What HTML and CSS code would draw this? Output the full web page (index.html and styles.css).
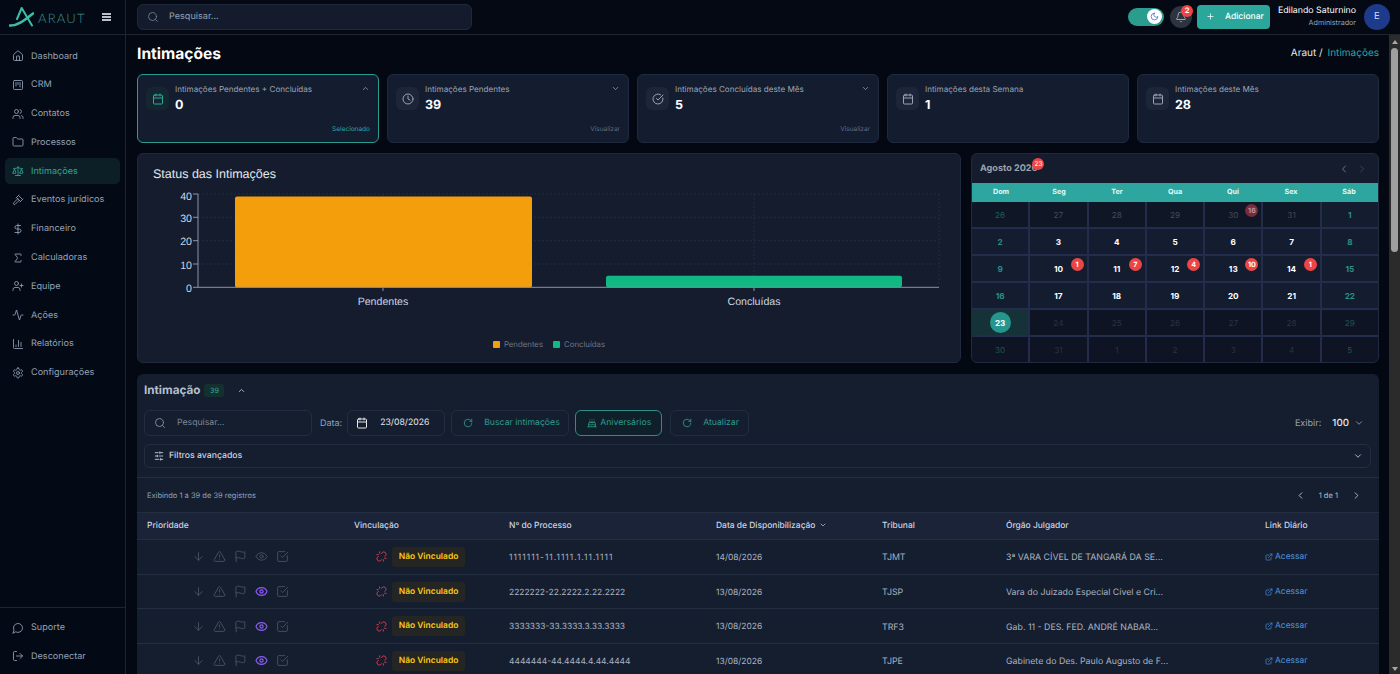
FILE: index.html
```html
<!DOCTYPE html>
<html lang="pt-BR">

<head>
    <meta charset="UTF-8">
    <meta name="viewport" content="width=device-width, initial-scale=1.0">
    <title>Intimações | Araut</title>
    <link rel="stylesheet" href="styles.css">
</head>

<body>
    <svg class="sprite" xmlns="http://www.w3.org/2000/svg">
        <symbol id="i-home" viewBox="0 0 24 24"><path d="M15 21v-8a1 1 0 0 0-1-1h-4a1 1 0 0 0-1 1v8"/><path d="M3 10a2 2 0 0 1 .709-1.528l7-5.999a2 2 0 0 1 2.582 0l7 5.999A2 2 0 0 1 21 10v9a2 2 0 0 1-2 2H5a2 2 0 0 1-2-2z"/></symbol>
        <symbol id="i-crm" viewBox="0 0 24 24"><rect x="3" y="3" width="18" height="18" rx="2"/><path d="M8 7v7"/><path d="M12 7v4"/><path d="M16 7v9"/></symbol>
        <symbol id="i-users" viewBox="0 0 24 24"><path d="M16 21v-2a4 4 0 0 0-4-4H6a4 4 0 0 0-4 4v2"/><circle cx="9" cy="7" r="4"/><path d="M22 21v-2a4 4 0 0 0-3-3.87"/><path d="M16 3.13a4 4 0 0 1 0 7.75"/></symbol>
        <symbol id="i-folder" viewBox="0 0 24 24"><path d="M20 20a2 2 0 0 0 2-2V8a2 2 0 0 0-2-2h-7.9a2 2 0 0 1-1.69-.9L9.6 3.9A2 2 0 0 0 7.93 3H4a2 2 0 0 0-2 2v13a2 2 0 0 0 2 2Z"/></symbol>
        <symbol id="i-scale" viewBox="0 0 24 24"><path d="m16 16 3-8 3 8c-.87.65-1.92 1-3 1s-2.13-.35-3-1Z"/><path d="m2 16 3-8 3 8c-.87.65-1.92 1-3 1s-2.13-.35-3-1Z"/><path d="M7 21h10"/><path d="M12 3v18"/><path d="M3 7h2c2 0 5-1 7-2 2 1 5 2 7 2h2"/></symbol>
        <symbol id="i-gavel" viewBox="0 0 24 24"><path d="m14.5 12.5-8 8a2.119 2.119 0 1 1-3-3l8-8"/><path d="m16 16 6-6"/><path d="m8 8 6-6"/><path d="m9 7 8 8"/><path d="m21 11-8-8"/></symbol>
        <symbol id="i-dollar" viewBox="0 0 24 24"><path d="M12 2v20"/><path d="M17 5H9.5a3.5 3.5 0 0 0 0 7h5a3.5 3.5 0 0 1 0 7H6"/></symbol>
        <symbol id="i-sigma" viewBox="0 0 24 24"><path d="M18 7V5a1 1 0 0 0-1-1H6.5a.5.5 0 0 0-.4.8l4.5 6a2 2 0 0 1 0 2.4l-4.5 6a.5.5 0 0 0 .4.8H17a1 1 0 0 0 1-1v-2"/></symbol>
        <symbol id="i-user-plus" viewBox="0 0 24 24"><path d="M16 21v-2a4 4 0 0 0-4-4H6a4 4 0 0 0-4 4v2"/><circle cx="9" cy="7" r="4"/><path d="M19 8v6"/><path d="M22 11h-6"/></symbol>
        <symbol id="i-activity" viewBox="0 0 24 24"><path d="M22 12h-2.48a2 2 0 0 0-1.93 1.46l-2.35 8.36a.25.25 0 0 1-.48 0L9.24 2.18a.25.25 0 0 0-.48 0l-2.35 8.36A2 2 0 0 1 4.49 12H2"/></symbol>
        <symbol id="i-chart" viewBox="0 0 24 24"><path d="M3 3v16a2 2 0 0 0 2 2h16"/><path d="M18 17V9"/><path d="M13 17V5"/><path d="M8 17v-3"/></symbol>
        <symbol id="i-settings" viewBox="0 0 24 24"><path d="M12.22 2h-.44a2 2 0 0 0-2 2v.18a2 2 0 0 1-1 1.73l-.43.25a2 2 0 0 1-2 0l-.15-.08a2 2 0 0 0-2.73.73l-.22.38a2 2 0 0 0 .73 2.73l.15.1a2 2 0 0 1 1 1.72v.51a2 2 0 0 1-1 1.74l-.15.09a2 2 0 0 0-.73 2.73l.22.38a2 2 0 0 0 2.73.73l.15-.08a2 2 0 0 1 2 0l.43.25a2 2 0 0 1 1 1.73V20a2 2 0 0 0 2 2h.44a2 2 0 0 0 2-2v-.18a2 2 0 0 1 1-1.73l.43-.25a2 2 0 0 1 2 0l.15.08a2 2 0 0 0 2.73-.73l.22-.39a2 2 0 0 0-.73-2.73l-.15-.08a2 2 0 0 1-1-1.74v-.5a2 2 0 0 1 1-1.74l.15-.09a2 2 0 0 0 .73-2.73l-.22-.38a2 2 0 0 0-2.73-.73l-.15.08a2 2 0 0 1-2 0l-.43-.25a2 2 0 0 1-1-1.73V4a2 2 0 0 0-2-2z"/><circle cx="12" cy="12" r="3"/></symbol>
        <symbol id="i-message" viewBox="0 0 24 24"><path d="M7.9 20A9 9 0 1 0 4 16.1L2 22Z"/></symbol>
        <symbol id="i-logout" viewBox="0 0 24 24"><path d="M9 21H5a2 2 0 0 1-2-2V5a2 2 0 0 1 2-2h4"/><path d="m16 17 5-5-5-5"/><path d="M21 12H9"/></symbol>
        <symbol id="i-search" viewBox="0 0 24 24"><circle cx="11" cy="11" r="8"/><path d="m21 21-4.3-4.3"/></symbol>
        <symbol id="i-calendar" viewBox="0 0 24 24"><path d="M8 2v4"/><path d="M16 2v4"/><rect x="3" y="4" width="18" height="18" rx="2"/><path d="M3 10h18"/></symbol>
        <symbol id="i-clock" viewBox="0 0 24 24"><circle cx="12" cy="12" r="10"/><path d="M12 6v6l4 2"/></symbol>
        <symbol id="i-circle-check" viewBox="0 0 24 24"><path d="M21.801 10A10 10 0 1 1 17 3.335"/><path d="m9 11 3 3L22 4"/></symbol>
        <symbol id="i-up" viewBox="0 0 24 24"><path d="m18 15-6-6-6 6"/></symbol>
        <symbol id="i-down" viewBox="0 0 24 24"><path d="m6 9 6 6 6-6"/></symbol>
        <symbol id="i-left" viewBox="0 0 24 24"><path d="m15 18-6-6 6-6"/></symbol>
        <symbol id="i-right" viewBox="0 0 24 24"><path d="m9 18 6-6-6-6"/></symbol>
        <symbol id="i-plus" viewBox="0 0 24 24"><path d="M5 12h14"/><path d="M12 5v14"/></symbol>
        <symbol id="i-bell" viewBox="0 0 24 24"><path d="M10.268 21a2 2 0 0 0 3.464 0"/><path d="M3.262 15.326A1 1 0 0 0 4 17h16a1 1 0 0 0 .74-1.673C19.41 13.956 18 12.499 18 8A6 6 0 0 0 6 8c0 4.499-1.411 5.956-2.738 7.326"/></symbol>
        <symbol id="i-moon" viewBox="0 0 24 24"><path d="M12 3a6 6 0 0 0 9 9 9 9 0 1 1-9-9Z"/></symbol>
        <symbol id="i-refresh" viewBox="0 0 24 24"><path d="M21 12a9 9 0 1 1-9-9c2.52 0 4.93 1 6.74 2.74L21 8"/><path d="M21 3v5h-5"/></symbol>
        <symbol id="i-cake" viewBox="0 0 24 24"><path d="M20 21v-8a2 2 0 0 0-2-2H6a2 2 0 0 0-2 2v8"/><path d="M4 16s.5-1 2-1 2.5 2 4 2 2.5-2 4-2 2.5 2 4 2 2-1 2-1"/><path d="M2 21h20"/><path d="M7 8v3"/><path d="M12 8v3"/><path d="M17 8v3"/><path d="M7 4h.01"/><path d="M12 4h.01"/><path d="M17 4h.01"/></symbol>
        <symbol id="i-sliders" viewBox="0 0 24 24"><path d="M21 4h-7"/><path d="M10 4H3"/><path d="M21 12h-9"/><path d="M8 12H3"/><path d="M21 20h-5"/><path d="M12 20H3"/><path d="M14 2v4"/><path d="M8 10v4"/><path d="M16 18v4"/></symbol>
        <symbol id="i-arrow-down" viewBox="0 0 24 24"><path d="M12 5v14"/><path d="m19 12-7 7-7-7"/></symbol>
        <symbol id="i-alert" viewBox="0 0 24 24"><path d="m21.73 18-8-14a2 2 0 0 0-3.48 0l-8 14A2 2 0 0 0 4 21h16a2 2 0 0 0 1.73-3"/><path d="M12 9v4"/><path d="M12 17h.01"/></symbol>
        <symbol id="i-flag" viewBox="0 0 24 24"><path d="M4 15s1-1 4-1 5 2 8 2 4-1 4-1V3s-1 1-4 1-5-2-8-2-4 1-4 1z"/><path d="M4 22v-7"/></symbol>
        <symbol id="i-eye" viewBox="0 0 24 24"><path d="M2.062 12.348a1 1 0 0 1 0-.696 10.75 10.75 0 0 1 19.876 0 1 1 0 0 1 0 .696 10.75 10.75 0 0 1-19.876 0"/><circle cx="12" cy="12" r="3"/></symbol>
        <symbol id="i-check" viewBox="0 0 24 24"><path d="M21 10.5V19a2 2 0 0 1-2 2H5a2 2 0 0 1-2-2V5a2 2 0 0 1 2-2h11"/><path d="m9 11 3 3L22 4"/></symbol>
        <symbol id="i-unlink" viewBox="0 0 24 24"><path d="m18.84 12.25 1.72-1.71h-.02a5.004 5.004 0 0 0-.12-7.07 5.006 5.006 0 0 0-6.95 0l-1.72 1.71"/><path d="m5.17 11.75-1.71 1.71a5.004 5.004 0 0 0 .12 7.07 5.006 5.006 0 0 0 6.95 0l1.71-1.71"/><path d="M8 2v3"/><path d="M2 8h3"/><path d="M16 19v3"/><path d="M19 16h3"/></symbol>
        <symbol id="i-external" viewBox="0 0 24 24"><path d="M15 3h6v6"/><path d="M10 14 21 3"/><path d="M18 13v6a2 2 0 0 1-2 2H5a2 2 0 0 1-2-2V8a2 2 0 0 1 2-2h6"/></symbol>
    </svg>

    <div class="app">
        <aside class="sidebar">
            <div class="brand">
                <svg class="brand-mark" viewBox="0 0 25 20" fill="none" stroke="#3dbcaa" stroke-linecap="round" stroke-linejoin="round">
                    <path d="M8 12 12.7 1 23 18.5" stroke-width="2"/>
                    <path d="M1 18.5C8 19 14 14.5 24 6.5" stroke-width="2.6"/>
                </svg>
                <span class="brand-name">ARAUT</span>
                <span class="burger"><i></i><i></i><i></i></span>
            </div>
            <nav class="nav">
                <a class="nav-item"><svg class="icon"><use href="#i-home"/></svg>Dashboard</a>
                <a class="nav-item"><svg class="icon"><use href="#i-crm"/></svg>CRM</a>
                <a class="nav-item"><svg class="icon"><use href="#i-users"/></svg>Contatos</a>
                <a class="nav-item"><svg class="icon"><use href="#i-folder"/></svg>Processos</a>
                <a class="nav-item active"><svg class="icon"><use href="#i-scale"/></svg>Intimações</a>
                <a class="nav-item"><svg class="icon"><use href="#i-gavel"/></svg>Eventos jurídicos</a>
                <a class="nav-item"><svg class="icon"><use href="#i-dollar"/></svg>Financeiro</a>
                <a class="nav-item"><svg class="icon"><use href="#i-sigma"/></svg>Calculadoras</a>
                <a class="nav-item"><svg class="icon"><use href="#i-user-plus"/></svg>Equipe</a>
                <a class="nav-item"><svg class="icon"><use href="#i-activity"/></svg>Ações</a>
                <a class="nav-item"><svg class="icon"><use href="#i-chart"/></svg>Relatórios</a>
                <a class="nav-item"><svg class="icon"><use href="#i-settings"/></svg>Configurações</a>
            </nav>
            <div class="nav nav-foot">
                <a class="nav-item"><svg class="icon"><use href="#i-message"/></svg>Suporte</a>
                <a class="nav-item"><svg class="icon"><use href="#i-logout"/></svg>Desconectar</a>
            </div>
        </aside>

        <div class="column">
            <header class="topbar">
                <div class="top-search">
                    <svg class="icon"><use href="#i-search"/></svg>
                    <span>Pesquisar...</span>
                </div>
                <div class="top-actions">
                    <span class="toggle"><span class="knob"><svg class="icon"><use href="#i-moon"/></svg></span></span>
                    <span class="bell"><svg class="icon"><use href="#i-bell"/></svg><b class="bell-count">2</b></span>
                    <a class="add-btn"><svg class="icon"><use href="#i-plus"/></svg>Adicionar</a>
                    <div class="user">
                        <div class="user-name">Edilando Saturnino</div>
                        <div class="user-role">Administrador</div>
                    </div>
                    <span class="avatar">E</span>
                </div>
            </header>

            <div class="view">
                <main class="main">
                    <div class="page-head">
                        <h1>Intimações</h1>
                        <div class="crumbs">Araut / <span>Intimações</span></div>
                    </div>

                    <div class="stats">
                        <div class="stat selected">
                            <span class="stat-icon"><svg class="icon"><use href="#i-calendar"/></svg></span>
                            <div class="stat-label">Intimações Pendentes + Concluídas</div>
                            <svg class="icon stat-chevron"><use href="#i-up"/></svg>
                            <div class="stat-value">0</div>
                            <div class="stat-foot">Selecionado</div>
                        </div>
                        <div class="stat">
                            <span class="stat-icon"><svg class="icon"><use href="#i-clock"/></svg></span>
                            <div class="stat-label">Intimações Pendentes</div>
                            <svg class="icon stat-chevron"><use href="#i-down"/></svg>
                            <div class="stat-value">39</div>
                            <div class="stat-foot">Visualizar</div>
                        </div>
                        <div class="stat">
                            <span class="stat-icon"><svg class="icon"><use href="#i-circle-check"/></svg></span>
                            <div class="stat-label">Intimações Concluídas deste Mês</div>
                            <svg class="icon stat-chevron"><use href="#i-down"/></svg>
                            <div class="stat-value">5</div>
                            <div class="stat-foot">Visualizar</div>
                        </div>
                        <div class="stat">
                            <span class="stat-icon"><svg class="icon"><use href="#i-calendar"/></svg></span>
                            <div class="stat-label">Intimações desta Semana</div>
                            <div class="stat-value">1</div>
                        </div>
                        <div class="stat">
                            <span class="stat-icon"><svg class="icon"><use href="#i-calendar"/></svg></span>
                            <div class="stat-label">Intimações deste Mês</div>
                            <div class="stat-value">28</div>
                        </div>
                    </div>

                    <div class="panels">
                        <section class="chart-card">
                            <h3>Status das Intimações</h3>
                            <svg class="chart" viewBox="138 188 822 150">
                                <g class="grid-lines">
                                    <path d="M198 194H939M198 217.3H939M198 240.7H939M198 264H939"/>
                                    <path d="M754 194V287M939 194V287M383 194V197"/>
                                </g>
                                <rect x="235" y="196.5" width="297" height="91" rx="2" fill="#f59e0b"/>
                                <rect x="606" y="275.7" width="296" height="11.6" rx="2" fill="#10b981"/>
                                <path class="axis" d="M198 194V287.3H939M193 194H198M193 217.3H198M193 240.7H198M193 264H198M193 287.3H198M383 287.3V291M754 287.3V291"/>
                                <g class="tick-y">
                                    <text x="192" y="200">40</text>
                                    <text x="192" y="222">30</text>
                                    <text x="192" y="245">20</text>
                                    <text x="192" y="268.5">10</text>
                                    <text x="192" y="291.5">0</text>
                                </g>
                                <g class="tick-x">
                                    <text x="383" y="305">Pendentes</text>
                                    <text x="754" y="305">Concluídas</text>
                                </g>
                            </svg>
                            <div class="legend">
                                <span class="legend-item"><i class="amber"></i>Pendentes</span>
                                <span class="legend-item"><i class="green"></i>Concluídas</span>
                            </div>
                        </section>

                        <section class="calendar">
                            <div class="cal-head">
                                <div class="cal-title">Agosto 2026<b class="cal-count">23</b></div>
                                <div class="cal-nav">
                                    <svg class="icon"><use href="#i-left"/></svg>
                                    <svg class="icon faint"><use href="#i-right"/></svg>
                                </div>
                            </div>
                            <div class="cal-week">
                                <span>Dom</span><span>Seg</span><span>Ter</span><span>Qua</span><span>Qui</span><span>Sex</span><span>Sáb</span>
                            </div>
                            <div class="cal-grid">
                                <div class="day prev weekend">26</div>
                                <div class="day prev">27</div>
                                <div class="day prev">28</div>
                                <div class="day prev">29</div>
                                <div class="day prev">30<b class="count faded">16</b></div>
                                <div class="day prev">31</div>
                                <div class="day weekend">1</div>

                                <div class="day weekend">2</div>
                                <div class="day">3</div>
                                <div class="day">4</div>
                                <div class="day">5</div>
                                <div class="day">6</div>
                                <div class="day">7</div>
                                <div class="day weekend">8</div>

                                <div class="day weekend">9</div>
                                <div class="day">10<b class="count">1</b></div>
                                <div class="day">11<b class="count">7</b></div>
                                <div class="day">12<b class="count">4</b></div>
                                <div class="day">13<b class="count">10</b></div>
                                <div class="day">14<b class="count">1</b></div>
                                <div class="day weekend">15</div>

                                <div class="day weekend">16</div>
                                <div class="day">17</div>
                                <div class="day">18</div>
                                <div class="day">19</div>
                                <div class="day">20</div>
                                <div class="day">21</div>
                                <div class="day weekend">22</div>

                                <div class="day today"><span>23</span></div>
                                <div class="day next">24</div>
                                <div class="day next">25</div>
                                <div class="day next">26</div>
                                <div class="day next">27</div>
                                <div class="day next">28</div>
                                <div class="day next weekend">29</div>

                                <div class="day next weekend">30</div>
                                <div class="day next">31</div>
                                <div class="day next">1</div>
                                <div class="day next">2</div>
                                <div class="day next">3</div>
                                <div class="day next">4</div>
                                <div class="day next weekend">5</div>
                            </div>
                        </section>
                    </div>

                    <section class="list">
                        <div class="list-head">
                            <h2>Intimação</h2>
                            <span class="list-count">39</span>
                            <svg class="icon"><use href="#i-up"/></svg>
                        </div>

                        <div class="toolbar">
                            <div class="field search"><svg class="icon"><use href="#i-search"/></svg><span>Pesquisar...</span></div>
                            <span class="field-label">Data:</span>
                            <div class="field date"><svg class="icon"><use href="#i-calendar"/></svg><span>23/08/2026</span></div>
                            <a class="tool buscar"><svg class="icon"><use href="#i-refresh"/></svg>Buscar intimações</a>
                            <a class="tool birthdays"><svg class="icon"><use href="#i-cake"/></svg>Aniversários</a>
                            <a class="tool update"><svg class="icon"><use href="#i-refresh"/></svg>Atualizar</a>
                            <div class="per-page">
                                <span>Exibir:</span>
                                <b>100</b>
                                <svg class="icon"><use href="#i-down"/></svg>
                            </div>
                        </div>

                        <div class="filters">
                            <svg class="icon"><use href="#i-sliders"/></svg>
                            <span>Filtros avançados</span>
                            <svg class="icon filters-chevron"><use href="#i-down"/></svg>
                        </div>

                        <div class="info-row">
                            <span>Exibindo 1 a 39 de 39 registros</span>
                            <div class="pager">
                                <svg class="icon"><use href="#i-left"/></svg>
                                <span>1 de 1</span>
                                <svg class="icon"><use href="#i-right"/></svg>
                            </div>
                        </div>

                        <table class="table">
                            <thead>
                                <tr>
                                    <th class="c-prio">Prioridade</th>
                                    <th class="c-link">Vinculação</th>
                                    <th class="c-num">Nº do Processo</th>
                                    <th class="c-date">Data de Disponibilização <svg class="icon sort"><use href="#i-down"/></svg></th>
                                    <th class="c-court">Tribunal</th>
                                    <th class="c-org">Órgão Julgador</th>
                                    <th>Link Diário</th>
                                </tr>
                            </thead>
                            <tbody>
                                <tr>
                                    <td><div class="prio"><svg class="icon"><use href="#i-arrow-down"/></svg><svg class="icon"><use href="#i-alert"/></svg><svg class="icon"><use href="#i-flag"/></svg><svg class="icon"><use href="#i-eye"/></svg><svg class="icon"><use href="#i-check"/></svg></div></td>
                                    <td><div class="link-state"><svg class="icon"><use href="#i-unlink"/></svg><span>Não Vinculado</span></div></td>
                                    <td class="ones">1111111-11.1111.1.11.1111</td>
                                    <td>14/08/2026</td>
                                    <td>TJMT</td>
                                    <td>3ª VARA CÍVEL DE TANGARÁ DA SE...</td>
                                    <td><a class="open"><svg class="icon"><use href="#i-external"/></svg>Acessar</a></td>
                                </tr>
                                <tr>
                                    <td><div class="prio seen"><svg class="icon"><use href="#i-arrow-down"/></svg><svg class="icon"><use href="#i-alert"/></svg><svg class="icon"><use href="#i-flag"/></svg><svg class="icon"><use href="#i-eye"/></svg><svg class="icon"><use href="#i-check"/></svg></div></td>
                                    <td><div class="link-state"><svg class="icon"><use href="#i-unlink"/></svg><span>Não Vinculado</span></div></td>
                                    <td>2222222-22.2222.2.22.2222</td>
                                    <td>13/08/2026</td>
                                    <td>TJSP</td>
                                    <td>Vara do Juizado Especial Cível e Cri...</td>
                                    <td><a class="open"><svg class="icon"><use href="#i-external"/></svg>Acessar</a></td>
                                </tr>
                                <tr>
                                    <td><div class="prio seen"><svg class="icon"><use href="#i-arrow-down"/></svg><svg class="icon"><use href="#i-alert"/></svg><svg class="icon"><use href="#i-flag"/></svg><svg class="icon"><use href="#i-eye"/></svg><svg class="icon"><use href="#i-check"/></svg></div></td>
                                    <td><div class="link-state"><svg class="icon"><use href="#i-unlink"/></svg><span>Não Vinculado</span></div></td>
                                    <td>3333333-33.3333.3.33.3333</td>
                                    <td>13/08/2026</td>
                                    <td>TRF3</td>
                                    <td>Gab. 11 - DES. FED. ANDRÉ NABAR...</td>
                                    <td><a class="open"><svg class="icon"><use href="#i-external"/></svg>Acessar</a></td>
                                </tr>
                                <tr>
                                    <td><div class="prio seen"><svg class="icon"><use href="#i-arrow-down"/></svg><svg class="icon"><use href="#i-alert"/></svg><svg class="icon"><use href="#i-flag"/></svg><svg class="icon"><use href="#i-eye"/></svg><svg class="icon"><use href="#i-check"/></svg></div></td>
                                    <td><div class="link-state"><svg class="icon"><use href="#i-unlink"/></svg><span>Não Vinculado</span></div></td>
                                    <td>4444444-44.4444.4.44.4444</td>
                                    <td>13/08/2026</td>
                                    <td>TJPE</td>
                                    <td>Gabinete do Des. Paulo Augusto de F...</td>
                                    <td><a class="open"><svg class="icon"><use href="#i-external"/></svg>Acessar</a></td>
                                </tr>
                            </tbody>
                        </table>
                    </section>
                </main>

                <div class="scrollbar">
                    <i class="arrow-up"></i>
                    <i class="thumb"></i>
                    <i class="arrow-down"></i>
                </div>
            </div>
        </div>
    </div>
</body>

</html>
```

FILE: styles.css
```css
* {
    box-sizing: border-box;
}

html,
body {
    margin: 0;
    height: 100%;
    overflow: hidden;
}

body {
    background: #030812;
    color: #cbd5e1;
    font-family: Inter, "Liberation Sans", sans-serif;
    font-size: 9px;
    text-rendering: geometricPrecision;
}

h1,
h2,
h3 {
    margin: 0;
}

.sprite {
    display: none;
}

.icon {
    width: 12px;
    height: 12px;
    flex: none;
    fill: none;
    stroke: currentColor;
    stroke-width: 2;
    stroke-linecap: round;
    stroke-linejoin: round;
}

.app {
    display: grid;
    grid-template-columns: 126px 1fr;
    height: 100vh;
}

/* sidebar */
.sidebar {
    display: flex;
    flex-direction: column;
    background: #040a15;
    border-right: 1px solid #1d2531;
}

.brand {
    display: flex;
    align-items: center;
    height: 35px;
    flex: none;
    padding-left: 9px;
    border-bottom: 1px solid #1d2531;
}

.brand-mark {
    width: 25px;
    height: 20px;
}

.brand-name {
    margin-left: 4px;
    padding-top: 2px;
    color: #3f9188;
    font-family: Lato, sans-serif;
    font-size: 13px;
    font-weight: 300;
    letter-spacing: 1.2px;
}

.burger {
    display: flex;
    flex-direction: column;
    gap: 1.5px;
    margin-left: 16px;
}

.burger i {
    display: block;
    width: 9px;
    height: 1.5px;
    background: #b8c0cc;
}

.nav {
    display: flex;
    flex-direction: column;
    flex: 1;
    gap: 2.8px;
    padding: 8px 5px 0;
}

.nav-foot {
    flex: none;
    padding: 7px 5px 4.7px;
    border-top: 1px solid #1d2531;
}

.nav-item {
    display: flex;
    align-items: center;
    gap: 7px;
    height: 26px;
    padding-left: 7px;
    border-radius: 5px;
    color: #94a3b8;
    font-size: 9.1px;
}

.nav-item .icon {
    stroke-width: 1.7;
}

.nav-item.active {
    background: #0c1f26;
    color: #2ea79c;
}

/* top bar */
.column {
    display: flex;
    flex-direction: column;
    min-width: 0;
    height: 100vh;
}

.topbar {
    display: flex;
    align-items: center;
    justify-content: space-between;
    height: 35px;
    flex: none;
    padding: 0 10px 1px 11px;
    border-bottom: 1px solid #1d2531;
    background: #040913;
}

.top-search {
    display: flex;
    align-items: center;
    gap: 10px;
    width: 335px;
    height: 26px;
    padding-left: 9px;
    background: #131b2d;
    border: 1px solid #1e293b;
    border-radius: 6px;
    color: #94a3b8;
    font-size: 9.1px;
}

.top-search .icon {
    stroke-width: 1.6;
    color: #7b8798;
}

.top-actions {
    display: flex;
    align-items: center;
}

.toggle {
    display: flex;
    justify-content: flex-end;
    align-items: center;
    width: 36px;
    height: 18px;
    padding-right: 2px;
    background: #2a9d8f;
    border-radius: 9px;
}

.knob {
    display: flex;
    align-items: center;
    justify-content: center;
    width: 15px;
    height: 15px;
    border-radius: 50%;
    background: #fff;
    color: #3b62d6;
}

.knob .icon {
    width: 9px;
    height: 9px;
}

.bell {
    position: relative;
    display: flex;
    align-items: center;
    justify-content: center;
    width: 22px;
    height: 22px;
    margin-left: 6px;
    border-radius: 50%;
    background: #2d343f;
    color: #9aa3b0;
}

.bell-count {
    position: absolute;
    top: -1px;
    right: -1px;
    width: 12px;
    height: 12px;
    border-radius: 50%;
    background: #ef4444;
    color: #fff;
    font-size: 7.5px;
    line-height: 12px;
    text-align: center;
}

.add-btn {
    display: flex;
    align-items: center;
    gap: 10px;
    width: 73px;
    height: 24px;
    margin-left: 5px;
    padding-left: 9px;
    border-radius: 4px;
    background: #2ba69b;
    color: #fff;
    font-size: 8.5px;
    font-weight: 500;
}

.add-btn .icon {
    width: 9px;
    height: 9px;
}

.user {
    width: 86px;
    text-align: right;
}

.user-name {
    color: #fff;
    font-size: 8.8px;
    line-height: 12px;
}

.user-role {
    color: #94a3b8;
    font-size: 7.15px;
    line-height: 11px;
}

.avatar {
    display: flex;
    align-items: center;
    justify-content: center;
    width: 26px;
    height: 26px;
    margin-left: 8px;
    border-radius: 50%;
    background: #1e3a8a;
    color: #bfdbfe;
    font-size: 9.6px;
}

/* page */
.view {
    display: flex;
    flex: 1;
    min-height: 0;
}

.main {
    flex: 1;
    min-width: 0;
    overflow: hidden;
    padding: 0 10px 0 11px;
    background: #030812;
}

.scrollbar {
    display: flex;
    flex-direction: column;
    align-items: center;
    flex: none;
    width: 11px;
    background: #2b2b2b;
}

.thumb {
    display: block;
    width: 7px;
    height: 204px;
    margin-top: 4px;
    border-radius: 4px;
    background: #9f9f9f;
}

.arrow-up,
.arrow-down {
    display: block;
    width: 0;
    height: 0;
    border-left: 3.5px solid transparent;
    border-right: 3.5px solid transparent;
}

.arrow-up {
    margin-top: 5px;
    border-bottom: 4px solid #a8a8a8;
}

.arrow-down {
    margin-top: auto;
    margin-bottom: 3px;
    border-top: 4px solid #a8a8a8;
}

.page-head {
    display: flex;
    align-items: center;
    justify-content: space-between;
    height: 24px;
    margin: 6px 0 9px;
}

.page-head h1 {
    color: #fff;
    font-size: 15.6px;
    font-weight: 700;
}

.crumbs {
    color: #e5e7eb;
    font-size: 10px;
}

.crumbs span {
    margin-left: 2px;
    color: #2ea79c;
}

/* stat cards */
.stats {
    display: grid;
    grid-template-columns: repeat(5, 1fr);
    gap: 8px;
}

.stat {
    position: relative;
    height: 69px;
    padding: 9px 8px 0 37px;
    background: #141c2f;
    border: 1px solid #1f2a3e;
    border-radius: 6px;
}

.stat.selected {
    border-color: #2a9d8f;
}

.stat-icon {
    position: absolute;
    top: 12px;
    left: 8px;
    display: flex;
    align-items: center;
    justify-content: center;
    width: 23px;
    height: 23px;
    border-radius: 6px;
    background: #1c2539;
    color: #9ca3af;
}

.stat.selected .stat-icon {
    background: #14262f;
    color: #2ea79c;
}

.stat-label {
    color: #9ca3af;
    font-size: 8.1px;
    line-height: 11px;
}

.stat-value {
    margin-top: 3px;
    color: #fff;
    font-size: 12.5px;
    font-weight: 700;
    line-height: 16px;
}

.stat-chevron {
    position: absolute;
    top: 9px;
    right: 8px;
    width: 9px;
    height: 9px;
    color: #9ca3af;
}

.stat-foot {
    position: absolute;
    right: 8px;
    bottom: 9px;
    color: #5e6b7d;
    font-size: 6.5px;
}

.stat.selected .stat-foot {
    color: #2ea79c;
}

/* chart + calendar */
.panels {
    display: grid;
    grid-template-columns: 824px 408px;
    gap: 10px;
    height: 210px;
    margin-top: 10px;
}

.chart-card {
    background: #141c2e;
    border: 1px solid #1f2a3e;
    border-radius: 6px;
}

.chart-card h3 {
    height: 34px;
    padding: 13px 15px 0;
    color: #e5e7eb;
    font-family: "Liberation Sans", Arial, sans-serif;
    font-size: 12.5px;
    font-weight: 400;
    line-height: 15px;
}

.chart {
    display: block;
    width: 822px;
    height: 150px;
}

.grid-lines path {
    fill: none;
    stroke: #222c3f;
    stroke-width: 1;
    stroke-dasharray: 2 2;
}

.axis {
    fill: none;
    stroke: #8b95a7;
    stroke-width: 1;
}

.chart text {
    fill: #cbd5e1;
    font-family: "Liberation Sans", Arial, sans-serif;
    font-size: 10.6px;
}

.tick-y text {
    text-anchor: end;
}

.tick-x text {
    text-anchor: middle;
}

.legend {
    display: flex;
    justify-content: center;
    align-items: center;
    gap: 10px;
    height: 12px;
    color: #6b7688;
    font-size: 7.8px;
}

.legend-item {
    display: flex;
    align-items: center;
    gap: 4px;
}

.legend-item i {
    display: block;
    width: 7px;
    height: 7px;
    border-radius: 1px;
}

.amber {
    background: #f59e0b;
}

.green {
    background: #10b981;
}

.calendar {
    display: flex;
    flex-direction: column;
    overflow: hidden;
    background: #141c2e;
    border: 1px solid #1f2a3e;
    border-radius: 6px;
}

.cal-head {
    display: flex;
    align-items: center;
    justify-content: space-between;
    height: 29px;
    flex: none;
    padding: 0 10px 0 8px;
}

.cal-title {
    position: relative;
    color: #9ca3af;
    font-size: 9.1px;
    font-weight: 700;
}

.cal-count {
    position: absolute;
    top: -5px;
    right: -7px;
    width: 12px;
    height: 12px;
    border-radius: 50%;
    background: #ef4444;
    color: #fff;
    font-size: 6.5px;
    font-weight: 400;
    line-height: 12px;
    text-align: center;
}

.cal-nav {
    display: flex;
    gap: 6px;
    color: #6b7688;
}

.cal-nav .faint {
    color: #3c4658;
}

.cal-week {
    display: grid;
    grid-template-columns: repeat(7, 1fr);
    flex: none;
    height: 19px;
    background: #2ca69e;
    color: #e6f7f5;
    font-size: 7.15px;
    font-weight: 700;
    line-height: 18px;
    text-align: center;
}

.cal-grid {
    display: grid;
    grid-template-columns: repeat(7, 1fr);
    grid-auto-rows: 1fr;
    flex: 1;
    gap: 2px;
    background: #232c4a;
}

.day {
    position: relative;
    display: flex;
    align-items: center;
    justify-content: center;
    background: #141c30;
    color: #fff;
    font-size: 8.2px;
    font-weight: 700;
}

.day.weekend {
    color: #2a8f88;
}

.day.prev {
    background: #0f1626;
    color: #434c5c;
    font-weight: 400;
}

.day.prev.weekend {
    color: #1f5f5c;
}

.day.next {
    background: #0e1423;
    color: #2b3342;
    font-weight: 400;
}

.day.next.weekend {
    color: #1d5552;
}

.day.today {
    background: #163239;
}

.day.today span {
    display: flex;
    align-items: center;
    justify-content: center;
    width: 21px;
    height: 21px;
    border-radius: 50%;
    background: #25958d;
}

.count {
    position: absolute;
    top: 2px;
    right: 3px;
    width: 13px;
    height: 13px;
    border-radius: 50%;
    background: #ef4444;
    color: #fff;
    font-size: 7.15px;
    font-weight: 700;
    line-height: 13px;
    text-align: center;
}

.count.faded {
    background: #7a2a3c;
    color: #b9939c;
}

/* list section */
.list {
    margin-top: 11px;
    background: #151e2f;
    border-radius: 6px 6px 0 0;
}

.list-head {
    display: flex;
    align-items: center;
    height: 36px;
    padding: 0 0 4px 7px;
    color: #cbd5e1;
}

.list-head h2 {
    color: #b6bfcc;
    font-size: 11.7px;
    font-weight: 700;
}

.list-count {
    width: 20px;
    height: 13px;
    margin-left: 4px;
    border-radius: 3px;
    background: #14312f;
    color: #2ea79c;
    font-size: 7.15px;
    line-height: 13px;
    text-align: center;
}

.list-head .icon {
    width: 9px;
    height: 9px;
    margin-left: 13px;
}

.toolbar {
    display: flex;
    align-items: center;
    height: 26px;
    margin: 0 8px 8px 7px;
}

.field,
.tool {
    display: flex;
    align-items: center;
    height: 26px;
    border: 1px solid #232d40;
    border-radius: 6px;
    font-size: 8.7px;
}

.field.search {
    gap: 11px;
    width: 168px;
    padding-left: 9px;
    color: #7c8798;
}

.field-label {
    margin: 0 5px 0 8px;
    color: #94a3b8;
    font-size: 9px;
}

.field.date {
    gap: 12px;
    width: 98px;
    padding-left: 8px;
    color: #e5e7eb;
}

.tool {
    margin-left: 6px;
    color: #2e9a8e;
}

.tool .icon {
    width: 10px;
    height: 10px;
}

.buscar {
    gap: 11px;
    width: 118px;
    padding-left: 11px;
}

.birthdays {
    gap: 3px;
    width: 87px;
    padding-left: 11px;
    background: #10202b;
    border-color: #2a8f88;
}

.update {
    gap: 11px;
    width: 79px;
    margin-left: 8px;
    padding-left: 11px;
}

.per-page {
    display: flex;
    align-items: center;
    margin-left: auto;
    margin-right: 7px;
    color: #94a3b8;
    font-size: 9.1px;
}

.per-page b {
    margin-left: 11px;
    color: #e5e7eb;
    font-size: 9.75px;
    font-weight: 500;
}

.per-page .icon {
    width: 10px;
    height: 10px;
    margin-left: 5px;
}

.filters {
    display: flex;
    align-items: center;
    gap: 5px;
    height: 24px;
    margin: 0 8px 9px 7px;
    padding: 0 7px 0 9px;
    border: 1px solid #232d40;
    border-radius: 6px;
    color: #cbd5e1;
    font-size: 8.7px;
    font-weight: 500;
}

.filters .icon {
    width: 10px;
    height: 10px;
}

.filters-chevron {
    margin-left: auto;
}

.info-row {
    display: flex;
    align-items: center;
    justify-content: space-between;
    height: 35px;
    padding: 0 17px 0 10px;
    border-top: 1px solid #242e41;
    color: #94a3b8;
    font-size: 7.5px;
}

.pager {
    display: flex;
    align-items: center;
    gap: 13px;
    color: #b6bfcc;
    font-size: 7.5px;
}

.pager .icon {
    width: 11px;
    height: 11px;
}

/* table */
.table {
    width: 100%;
    table-layout: fixed;
    border-collapse: collapse;
    font-size: 8.45px;
}

.table th {
    height: 27px;
    padding: 0 0 0 10px;
    background: #1a2338;
    border-top: 1px solid #242e41;
    border-bottom: 1px solid #242e41;
    color: #cbd5e1;
    font-weight: 500;
    text-align: left;
}

.table td {
    height: 34.7px;
    padding: 2px 0 0 10px;
    border-bottom: 1px solid #242e41;
    color: #aab3c1;
}

.table td:nth-child(5),
.table td:nth-child(6) {
    font-size: 8.8px;
}

.table td.ones {
    letter-spacing: 1px;
}

.c-prio {
    width: 207px;
}

.c-link {
    width: 155px;
}

.c-num {
    width: 207px;
}

.c-date {
    width: 166px;
}

.c-court {
    width: 124px;
}

.c-org {
    width: 259px;
}

.sort {
    width: 8px;
    height: 8px;
    margin-left: 1px;
    vertical-align: -1px;
}

.prio {
    display: flex;
    align-items: center;
    gap: 8px;
    margin: -2px 0 0 45px;
    color: #4b5566;
}

.prio .icon {
    width: 13px;
    height: 13px;
    stroke-width: 1.6;
}

.prio.seen .icon:nth-child(4) {
    color: #8b5cf6;
    stroke-width: 2.2;
}

.link-state {
    display: flex;
    align-items: center;
    gap: 5px;
    margin: -2px 0 0 22px;
}

.link-state .icon {
    width: 11px;
    height: 11px;
    color: #d9434f;
}

.link-state span {
    width: 73px;
    height: 20px;
    border-radius: 3px;
    background: #252523;
    color: #facc15;
    font-size: 8.45px;
    font-weight: 600;
    line-height: 20px;
    text-align: center;
}

.open {
    display: inline-flex;
    align-items: center;
    gap: 2px;
    color: #4f8fdc;
}

.open .icon {
    width: 8px;
    height: 8px;
}
```
